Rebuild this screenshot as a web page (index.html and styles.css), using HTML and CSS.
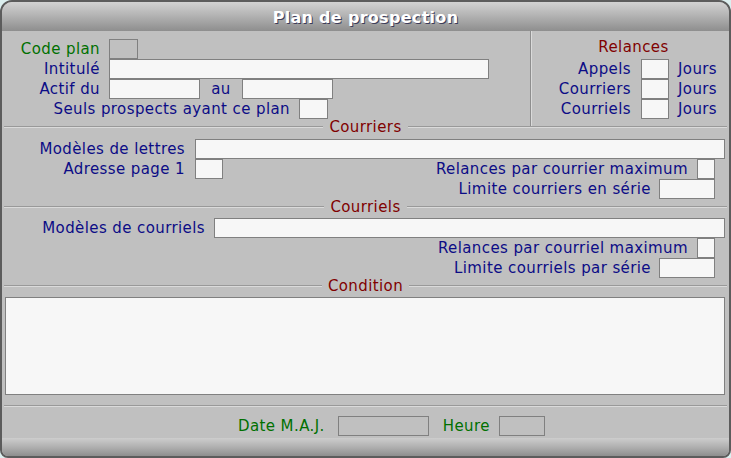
FILE: index.html
```html
<!DOCTYPE html>
<html lang="fr">
<head>
<meta charset="utf-8">
<title>Plan de prospection</title>
<link rel="stylesheet" href="styles.css">
</head>
<body>
<div class="window">
  <div class="titlebar">Plan de prospection</div>
  <div class="top">
    <div class="top-left">
      <div class="row">
        <span class="lbl green w98">Code plan</span>
        <span class="box gray w29"></span>
      </div>
      <div class="row">
        <span class="lbl w98">Intitulé</span>
        <span class="box w380"></span>
      </div>
      <div class="row">
        <span class="lbl w98">Actif du</span>
        <span class="box w91"></span>
        <span class="mid">au</span>
        <span class="box w91"></span>
      </div>
      <div class="row">
        <span class="lbl w288">Seuls prospects ayant ce plan</span>
        <span class="box w29"></span>
      </div>
    </div>
    <div class="top-right">
      <div class="rtitle">Relances</div>
      <div class="row">
        <span class="lbl w99">Appels</span>
        <span class="box w28"></span>
        <span class="unit">Jours</span>
      </div>
      <div class="row">
        <span class="lbl w99">Courriers</span>
        <span class="box w28"></span>
        <span class="unit">Jours</span>
      </div>
      <div class="row">
        <span class="lbl w99">Courriels</span>
        <span class="box w28"></span>
        <span class="unit">Jours</span>
      </div>
    </div>
  </div>

  <div class="sep first"><span class="line"></span><span class="sep-text">Courriers</span><span class="line"></span></div>
  <div class="section s1">
    <div class="row">
      <span class="lbl w183">Modèles de lettres</span>
      <span class="box grow"></span>
    </div>
    <div class="row">
      <span class="lbl w183">Adresse page 1</span>
      <span class="box w28"></span>
      <span class="right">
        <span class="lbl">Relances par courrier maximum</span>
        <span class="box w18"></span>
      </span>
    </div>
    <div class="row">
      <span class="right">
        <span class="lbl m8">Limite courriers en série</span>
        <span class="box w56"></span>
      </span>
    </div>
  </div>

  <div class="sep"><span class="line"></span><span class="sep-text">Courriels</span><span class="line"></span></div>
  <div class="section s2">
    <div class="row">
      <span class="lbl w203">Modèles de courriels</span>
      <span class="box grow"></span>
    </div>
    <div class="row">
      <span class="right">
        <span class="lbl">Relances par courriel maximum</span>
        <span class="box w18"></span>
      </span>
    </div>
    <div class="row">
      <span class="right">
        <span class="lbl m8">Limite courriels par série</span>
        <span class="box w56"></span>
      </span>
    </div>
  </div>

  <div class="sep"><span class="line"></span><span class="sep-text">Condition</span><span class="line"></span></div>
  <div class="condition"></div>
  <div class="hline"></div>

  <div class="footer">
    <span class="lbl green fl1">Date M.A.J.</span>
    <span class="box gray w91"></span>
    <span class="lbl green fl2">Heure</span>
    <span class="box gray w46"></span>
  </div>
  <div class="bottombar"></div>
</div>
</body>
</html>
```
FILE: styles.css
```css
html, body {
  margin: 0;
  padding: 0;
}
body {
  background: #dcefef;
  font-family: "DejaVu Sans", Verdana, sans-serif;
  font-size: 15px;
  letter-spacing: 0.4px;
  color: #0c0c86;
}
.window {
  box-sizing: border-box;
  width: 731px;
  height: 458px;
  border: 2px solid #5c5c5c;
  border-radius: 12px 12px 8px 8px;
  background: #c0c0c0;
  overflow: hidden;
  display: flex;
  flex-direction: column;
}
.titlebar {
  height: 29px;
  flex: none;
  background: linear-gradient(#d2d2d2, #b4b4b4 45%, #8e8e8e);
  color: #ffffff;
  font-weight: bold;
  font-size: 16px;
  text-align: center;
  line-height: 31px;
  text-shadow: 1px 1px 0 #3c3c5a;
  letter-spacing: 0.3px;
}
.top {
  height: 96px;
  flex: none;
  display: flex;
}
.top-left {
  width: 528px;
  padding-top: 8px;
  border-right: 1px solid #8e8e8e;
  box-shadow: 1px 0 0 #dadada;
}
.top-right {
  flex: 1;
  padding-top: 8px;
  padding-left: 1px;
}
.rtitle {
  height: 20px;
  line-height: 16px;
  color: #800000;
  text-align: center;
  padding-left: 6px;
}
.row {
  height: 20px;
  display: flex;
  align-items: center;
}
.lbl {
  white-space: nowrap;
  text-align: right;
  margin-right: 9px;
  flex: none;
}
.green { color: #007000; }
.m8 { margin-right: 8px; }
.w98 { width: 98px; }
.w99 { width: 99px; margin-right: 10px; }
.w183 { width: 183px; margin-right: 10px; }
.w203 { width: 203px; }
.w288 { width: 288px; }
.box {
  box-sizing: border-box;
  height: 20px;
  border: 1px solid #808080;
  background: #f7f7f7;
  flex: none;
}
.box.gray { background: #c0c0c0; }
.w18 { width: 18px; }
.w28 { width: 28px; }
.w29 { width: 29px; }
.w46 { width: 46px; }
.w56 { width: 56px; }
.w91 { width: 91px; }
.w380 { width: 380px; }
.grow { flex: 1; }
.mid {
  width: 42px;
  text-align: center;
}
.unit {
  margin-left: 9px;
}
.sep {
  height: 16px;
  flex: none;
  display: flex;
  align-items: center;
  padding: 0 2px;
}
.sep.first {
  margin-top: -8px;
}
.sep-text {
  color: #800000;
  padding: 0 6px;
  line-height: 16px;
}
.line {
  flex: 1;
  height: 0;
  border-top: 1px solid #999999;
  border-bottom: 1px solid #dadada;
}
.section {
  flex: none;
  padding-right: 4px;
}
.s1 { padding-top: 4px; }
.s2 { padding-top: 3px; }
.right {
  margin-left: auto;
  margin-right: 10px;
  display: flex;
  align-items: center;
}
.condition {
  flex: none;
  box-sizing: border-box;
  height: 98px;
  margin: 3px 4px 0 3px;
  border: 1px solid #808080;
  background: #f7f7f7;
}
.hline {
  flex: none;
  height: 0;
  margin: 10px 2px 0 2px;
  border-top: 1px solid #999999;
  border-bottom: 1px solid #dadada;
}
.footer {
  flex: none;
  height: 20px;
  margin-top: 9px;
  display: flex;
  align-items: center;
  padding-left: 236px;
}
.fl1 { margin-right: 13px; }
.fl2 { margin-left: 14px; margin-right: 9px; }
.bottombar {
  margin-top: auto;
  height: 18px;
  flex: none;
  background: linear-gradient(#cdcdcd, #b0b0b0 50%, #8e8e8e);
}
```
